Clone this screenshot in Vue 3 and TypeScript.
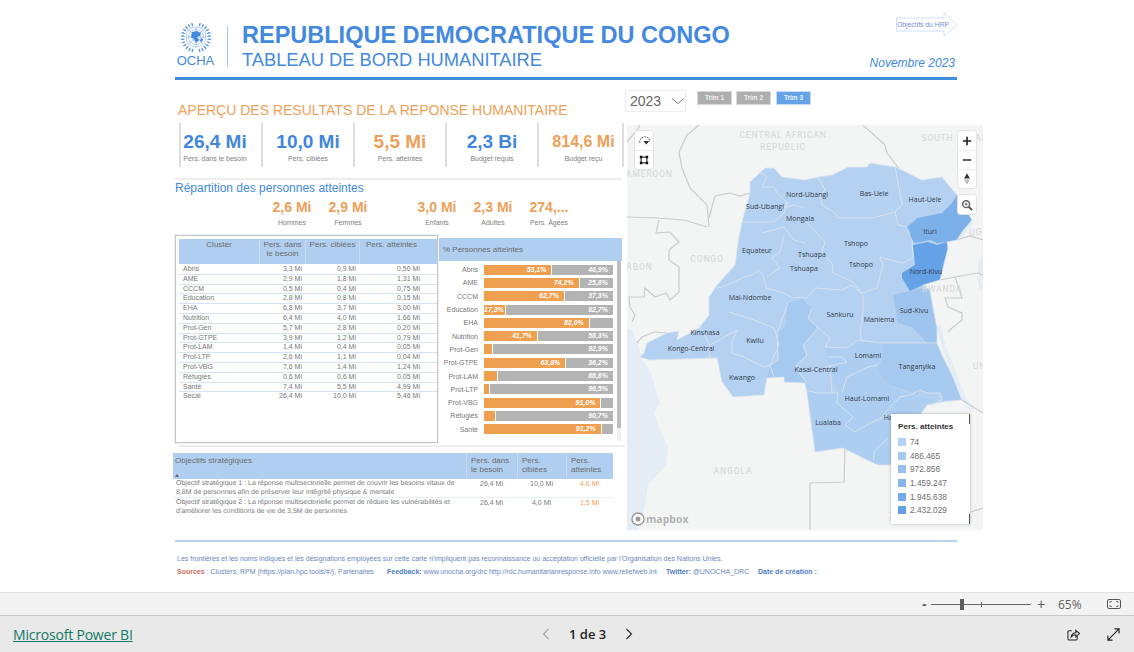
<template>
  <div class="app">
    <div class="report">
      <header class="head">
        <div class="logo">
          <svg class="emblem" viewBox="0 0 36 30">
            <g fill="none" stroke="#4389e0" stroke-width="0.4">
              <circle cx="18" cy="14" r="10" />
              <circle cx="18" cy="14" r="7.5" />
              <circle cx="18" cy="14" r="4.5" />
              <path d="M18 4V24M8 14H28M10.900 6.900L25.100 21.100M25.100 6.900L10.900 21.100" />
            </g>
            <path d="M14 9l5-1 4 2-1 3-3 1 2 3-3 3-2-4-3-2zM23 15l2 1-1 3-2-1z" fill="#4389e0" />
            <ellipse v-for="(l, i) in leaves" :key="i" :cx="l.x" :cy="l.y" rx="2.100" ry="0.750" :transform="`rotate(${l.r} ${l.x} ${l.y})`" fill="#5c98e4" />
          </svg>
          <span class="ocha">OCHA</span>
        </div>
        <div class="titles">
          <h1>REPUBLIQUE DEMOCRATIQUE DU CONGO</h1>
          <h2>TABLEAU DE BORD HUMANITAIRE</h2>
        </div>
        <div class="head-right">
          <button class="hrp">
            <svg viewBox="0 0 62 25"><path d="M.5 6H48V.8L61 12.500 48 24.200V19H.5z" fill="#fff" stroke="#cfe0f7" /></svg>
            <span>Objectifs du HRP</span>
          </button>
          <span class="month">Novembre 2023</span>
        </div>
      </header>

      <div class="main">
        <section class="left">
          <div class="apercu">APERÇU DES RESULTATS DE LA REPONSE HUMANITAIRE</div>
          <div class="kpis">
            <div v-for="k in kpis" :key="k.label" class="kpi">
              <span class="kpi-val" :class="[k.tone, { small: k.small }]">{{ k.value }}</span>
              <span class="kpi-lab">{{ k.label }}</span>
            </div>
          </div>
          <div class="rep-title">Répartition des personnes atteintes</div>
          <div class="rep-row">
            <div v-for="r in repart" :key="r.label" class="rep" :class="{ gap: r.gap }">
              <span class="rep-val">{{ r.value }}</span>
              <span class="rep-lab">{{ r.label }}</span>
            </div>
          </div>

          <div class="panels">
            <div class="panel-table">
              <div class="ct-head">
                <span class="center">Cluster</span>
                <span class="center">Pers. dans le besoin</span>
                <span class="center">Pers. ciblées</span>
                <span class="center">Pers. atteintes</span>
              </div>
              <div v-for="c in clusters" :key="c[0]" class="ct-row">
                <span>{{ c[0] }}</span>
                <span class="num">{{ c[1] }}</span>
                <span class="num">{{ c[2] }}</span>
                <span class="num">{{ c[3] }}</span>
              </div>
            </div>
            <div class="panel-bars">
              <div class="bars-head">% Personnes atteintes</div>
              <div class="bars-body">
                <div class="bars">
                  <div v-for="b in bars" :key="b.name" class="bar-row">
                    <span class="bar-name">{{ b.name }}</span>
                    <div class="bar">
                      <div class="seg orange" :style="{ width: b.pct + '%' }">{{ b.a }}</div>
                      <div class="seg grey">{{ b.b }}</div>
                    </div>
                  </div>
                </div>
                <div class="scroll"><div class="thumb"></div></div>
              </div>
            </div>
          </div>

          <div class="obj">
            <div class="obj-head">
              <span class="obj-first">Objectifs stratégiques<i class="sort"></i></span>
              <span>Pers. dans le besoin</span>
              <span>Pers. ciblées</span>
              <span>Pers. atteintes</span>
            </div>
            <div v-for="o in objectifs" :key="o.lines[0]" class="obj-row">
              <div class="obj-text">
                <div v-for="l in o.lines" :key="l">{{ l }}</div>
              </div>
              <span class="center">{{ o.a }}</span>
              <span class="center">{{ o.b }}</span>
              <span class="center tone-o">{{ o.c }}</span>
            </div>
          </div>
        </section>

        <section class="right">
          <div class="filters">
            <div class="year">
              <span>2023</span>
              <svg viewBox="0 0 16 8"><path d="M1 1l7 6 7-6" fill="none" stroke="#666" /></svg>
            </div>
            <div class="trims">
              <span class="trim">Trim 1</span>
              <span class="trim">Trim 2</span>
              <span class="trim on">Trim 3</span>
            </div>
          </div>

          <div class="map">
            <svg class="map-svg" viewBox="627 125 356 405">
              <path d="M627 328L632 330 638 345 642 360 650 370 660 403 654 413 660 430 668 447 666 465 648 485 645 505 637 530H627z" fill="#e4ecf6" />
              <path d="M983 255L978 262 977 280 980 290 983 288z" fill="#e4ecf6" />
              <path d="M972 222L964 232 958 240" fill="none" stroke="#e4ecf6" stroke-width="4" />
              <path d="M938 325L945 350 955 375 965 400 972 410" fill="none" stroke="#e4ecf6" stroke-width="4" />
              <polyline v-for="(p, i) in roads" :key="'b' + i" :points="p" fill="none" stroke="#c9cccd" stroke-width="1.200" />

              <path :d="country" fill="#b4d1f2" />
              <path v-for="p in provinces" :key="p.d" :d="p.d" :fill="p.fill" />
              <polyline v-for="(p, i) in inner" :key="'i' + i" :points="p" fill="none" stroke="#d6e2ee" stroke-width="1" />
              <path :d="country" fill="none" stroke="#dde5ec" stroke-width="0.800" />

              <text v-for="c in countries" :key="c.t + c.x" :x="c.x" :y="c.y" class="c-label" text-anchor="middle">{{ c.t }}</text>
              <text v-for="l in labels" :key="l.t + l.y" :x="l.x" :y="l.y" class="p-label" text-anchor="middle">{{ l.t }}</text>
            </svg>

            <div class="ctrl ctrl-left">
              <button>
                <svg viewBox="0 0 14 12"><path d="M2 8C1 3 5 1.500 8 1.500S13 4 12 7" fill="none" stroke="#555" stroke-dasharray="2 1" /><path d="M6 6h6L9 10z" fill="#333" /></svg>
              </button>
              <button>
                <svg viewBox="0 0 12 12"><path d="M2.500 2.500h7v7h-7z" fill="none" stroke="#111" stroke-width="1.200" /><path d="M1 1h3v3H1zM8 1h3v3H8zM1 8h3v3H1zM8 8h3v3H8z" fill="#111" /></svg>
              </button>
            </div>
            <div class="ctrl ctrl-right">
              <button><svg viewBox="0 0 12 12"><path d="M6 1v10M1 6h10" stroke="#222" stroke-width="2" /></svg></button>
              <button><svg viewBox="0 0 12 12"><path d="M1 6h10" stroke="#444" stroke-width="2" /></svg></button>
              <button><svg class="compass" viewBox="0 0 12 14"><path d="M6 0l3.500 6.500h-7z" fill="#333" /><path d="M6 14l3.500-6.500h-7z" fill="#bbb" /></svg></button>
            </div>
            <div class="ctrl ctrl-search">
              <button>
                <svg viewBox="0 0 14 14"><circle cx="6" cy="6" r="4" fill="none" stroke="#666" stroke-width="1.800" /><circle cx="6" cy="6" r="1.500" fill="#888" /><path d="M9 9l4 4" stroke="#555" stroke-width="2.200" /></svg>
              </button>
            </div>

            <div class="mapbox">
              <svg viewBox="0 0 14 14"><circle cx="7" cy="7" r="6" fill="#fff" stroke="#999" stroke-width="1.400" /><circle cx="7" cy="7" r="2.500" fill="#999" /></svg>
              <span>mapbox</span>
            </div>

            <div class="legend">
              <div class="legend-title">Pers. atteintes</div>
              <div v-for="l in legend" :key="l.t" class="legend-row">
                <i :style="{ background: l.c }"></i><span>{{ l.t }}</span>
              </div>
            </div>
          </div>
        </section>
      </div>

      <footer class="notes">
        <p>Les frontières et les noms indiqués et les désignations employées sur cette carte n'impliquent pas reconnaissance ou acceptation officielle par l'Organisation des Nations Unies.</p>
        <p class="links">
          <span class="l1"><b class="src">Sources</b> : Clusters, RPM (https://plan.hpc.tools/#/), Partenaires</span>
          <span class="l2"><b>Feedback:</b> www.unocha.org/drc http://rdc.humanitarianresponse.info www.reliefweb.int</span>
          <span class="l3"><b>Twitter:</b> @UNOCHA_DRC</span>
          <span class="l4"><b>Date de création :</b></span>
        </p>
      </footer>
    </div>

    <div class="zoombar">
      <span class="z-minus">-</span>
      <div class="slider"><i class="tick"></i><i class="knob"></i></div>
      <span class="z-plus">+</span>
      <span class="z-pct">65%</span>
      <svg class="z-fit" viewBox="0 0 14 10">
        <rect x="0.500" y="0.500" width="13" height="9" rx="1.500" fill="none" stroke="#555" />
        <path d="M3 4V2.500h2M11 4V2.500H9M3 6v1.500h2M11 6v1.500H9" fill="none" stroke="#555" stroke-width="0.800" />
      </svg>
    </div>

    <div class="pbibar">
      <a class="pbi-link">Microsoft Power BI</a>
      <div class="pager">
        <svg viewBox="0 0 8 12"><path d="M6.500 1L1.500 6l5 5" fill="none" stroke="#a8a8a8" stroke-width="1.200" /></svg>
        <span>1 de 3</span>
        <svg viewBox="0 0 8 12"><path d="M1.500 1l5 5-5 5" fill="none" stroke="#333" stroke-width="1.200" /></svg>
      </div>
      <div class="pbi-actions">
        <svg viewBox="0 0 14 14"><path d="M5 3H2.500A1.500 1.500 0 0 0 1 4.500v7A1.500 1.500 0 0 0 2.500 13h7a1.500 1.500 0 0 0 1.500-1.500V9" fill="none" stroke="#222" stroke-width="1.100" /><path d="M4.500 9.500C5 6.500 7 5 9.500 5V2.500L13.500 6 9.500 9.500V7.200C7.500 7.200 5.800 8 4.500 9.500z" fill="none" stroke="#222" stroke-width="1.100" /></svg>
        <svg viewBox="0 0 14 14"><path d="M1 13L13 1M8 1h5v5M1 8v5h5" fill="none" stroke="#222" stroke-width="1.200" /></svg>
      </div>
    </div>
  </div>
</template>

<script setup lang="ts">
// laurel leaves, both sides of the globe, bottom to top
const leaves = Array.from({ length: 24 }, (_, i) => {
  const side = i < 12 ? -1 : 1
  const n = i % 12
  const a = (15 + n * 13.500) * Math.PI / 180
  return {
    x: 18 + side * 13.500 * Math.sin(a),
    y: 14.500 + 13.500 * Math.cos(a),
    r: side * (75 - n * 13.500)
  }
})

const kpis = [
  { value: '26,4 Mi', label: 'Pers. dans le besoin', tone: 'tone-b' },
  { value: '10,0 Mi', label: 'Pers. ciblées', tone: 'tone-b' },
  { value: '5,5 Mi', label: 'Pers. atteintes', tone: 'tone-o' },
  { value: '2,3 Bi', label: 'Budget requis', tone: 'tone-b' },
  { value: '814,6 Mi', label: 'Budget reçu', tone: 'tone-o', small: true }
]

const repart = [
  { value: '2,6 Mi', label: 'Hommes' },
  { value: '2,9 Mi', label: 'Femmes' },
  { value: '3,0 Mi', label: 'Enfants', gap: true },
  { value: '2,3 Mi', label: 'Adultes' },
  { value: '274,...', label: 'Pers. Âgées' }
]

const clusters = [
  ['Abris', '3,3 Mi', '0,9 Mi', '0,50 Mi'],
  ['AME', '2,9 Mi', '1,8 Mi', '1,31 Mi'],
  ['CCCM', '0,5 Mi', '0,4 Mi', '0,75 Mi'],
  ['Education', '2,8 Mi', '0,8 Mi', '0,15 Mi'],
  ['EHA', '6,8 Mi', '3,7 Mi', '3,00 Mi'],
  ['Nutrition', '6,4 Mi', '4,0 Mi', '1,66 Mi'],
  ['Prot-Gen', '5,7 Mi', '2,8 Mi', '0,20 Mi'],
  ['Prot-GTPE', '3,9 Mi', '1,2 Mi', '0,79 Mi'],
  ['Prot-LAM', '1,4 Mi', '0,4 Mi', '0,05 Mi'],
  ['Prot-LTP', '2,6 Mi', '1,1 Mi', '0,04 Mi'],
  ['Prot-VBG', '7,6 Mi', '1,4 Mi', '1,24 Mi'],
  ['Réfugiés', '0,6 Mi', '0,6 Mi', '0,05 Mi'],
  ['Santé', '7,4 Mi', '5,5 Mi', '4,99 Mi'],
  ['Secal', '26,4 Mi', '10,0 Mi', '5,46 Mi']
]

const bars = [
  { name: 'Abris', pct: 53.1, a: '53,1%', b: '46,9%' },
  { name: 'AME', pct: 74.2, a: '74,2%', b: '25,8%' },
  { name: 'CCCM', pct: 62.7, a: '62,7%', b: '37,3%' },
  { name: 'Education', pct: 17.3, a: '17,3%', b: '82,7%' },
  { name: 'EHA', pct: 82, a: '82,0%', b: '' },
  { name: 'Nutrition', pct: 41.7, a: '41,7%', b: '58,3%' },
  { name: 'Prot-Gen', pct: 7.1, a: '', b: '92,9%' },
  { name: 'Prot-GTPE', pct: 63.8, a: '63,8%', b: '36,2%' },
  { name: 'Prot-LAM', pct: 11.2, a: '', b: '88,8%' },
  { name: 'Prot-LTP', pct: 3.5, a: '', b: '96,5%' },
  { name: 'Prot-VBG', pct: 91, a: '91,0%', b: '' },
  { name: 'Réfugiés', pct: 9.3, a: '', b: '90,7%' },
  { name: 'Santé', pct: 91.2, a: '91,2%', b: '' }
]

const objectifs = [
  {
    lines: ['Objectif stratégique 1 : La réponse multisectorielle permet de couvrir les besoins vitaux de', '8,8M de personnes afin de préserver leur intégrité physique & mentale'],
    a: '26,4 Mi', b: '10,0 Mi', c: '4,6 Mi'
  },
  {
    lines: ['Objectif stratégique 2 : La réponse multisectorielle permet de réduire les vulnérabilités et', "d'améliorer les conditions de vie de 3,5M de personnes"],
    a: '26,4 Mi', b: '4,0 Mi', c: '1,5 Mi'
  }
]

const country = 'M765 168L774 168 782 177 805 180 818 177 832 175 848 167 867 167 870 163 895 167 902 170 922 180 942 177 957 195 972 220 962 232 957 240 947 242 948 248 940 280 923 285 930 290 933 308 937 328 937 343 942 355 952 375 962 400 942 402 927 405 920 415 905 440 892 465 878 465 867 460 843 448 815 452 812 430 807 393 805 383 784 382 784 377 767 378 764 395 733 397 722 382 717 358 649 360 640 357 644 353 647 343 667 333 679 331 677 340 699 328 709 315 709 297 717 285 735 265 738 242 742 222 750 193 750 182z'

const provinces = [
  { fill: '#adcef1', d: 'M805 383L818 393 838 393 830 368 825 347 847 348 858 340 882 343 878 370 887 383 910 395 942 402 927 405 920 415 905 440 892 465 878 465 867 460 843 448 815 452 812 430 807 393z' },
  { fill: '#a5c9ef', d: 'M788 303L802 299 812 308 808 318 818 328 803 345 807 355 795 367 807 383 784 382 784 377 767 378 770 365 778 360 777 333 785 327z' },
  { fill: '#a6c9ef', d: 'M882 343L937 343 942 355 952 375 962 400 942 400 940 393 927 393 920 390 918 395 900 388 887 383 878 370 882 358z' },
  { fill: '#9fc5ee', d: 'M893 295L910 291 923 288 930 290 933 308 937 328 937 343 927 343 912 327 898 323z' },
  { fill: '#7cb0e9', d: 'M907 227L918 218 942 213 952 203 957 195 972 220 962 232 957 240 947 242 937 243 930 240 915 243 910 238 910 232z' },
  { fill: '#64a1e6', d: 'M913 245L928 242 937 245 947 242 948 248 940 280 923 285 910 291 902 278 902 273 915 265z' }
]

const inner = [
  '759,172 767,177 762,187 774,187 777,193 787,202 784,208 794,205 805,208',
  '742,222 760,222 774,222 784,213 788,202',
  '762,233 784,227 794,240 805,243',
  '784,235 780,252 772,258 780,268 767,277',
  '717,288 722,287 744,277 752,275 759,270 764,277 766,288 784,293 792,298 805,297',
  '709,345 710,358',
  '699,325 710,345 737,330',
  '729,312 754,320 774,328 779,345 770,365 774,377',
  '737,330 732,342 732,353 744,357 764,367 770,365',
  '818,177 825,190 820,195 822,205 835,213 838,218 872,218 895,212 902,205 895,167',
  '895,212 898,225 907,227',
  '907,230 912,240 913,258 902,263 880,257 883,265 877,288 862,293 853,282 832,272 833,265 822,252 825,242 812,228 805,220',
  '805,300 815,288 842,290 852,285 863,295 863,312 860,332 862,342',
  '815,325 830,338 825,347 847,348 858,340 882,343 937,343',
  '828,357 842,357 847,362 825,367 830,368 832,393',
  '805,390 818,393 838,393 837,403 853,417 845,425 855,432 870,423 888,415',
  '847,377 868,367 878,365',
  '847,377 842,393',
  '883,415 900,397 910,395 920,390 927,393 940,393 942,400 930,405',
  '888,438 875,450 873,460',
  '812,308 808,318 818,328 803,345 807,355 795,367 807,383',
  '788,303 777,333 778,360 770,365'
]

const roads = [
  '640,125 637,130 627,142',
  '699,125 687,135 679,152 682,168 690,188 707,205 709,227',
  '709,218 715,196 730,193 740,196 750,193',
  '627,217 657,218 684,220 707,227',
  '659,220 656,233 670,232 679,242 669,250 669,260 679,267 679,292 670,300 666,293 655,297 645,288 644,297 629,297 630,307 635,315 632,322',
  '863,125 885,145 887,153 900,170',
  '637,343 642,337 654,332 667,333',
  '940,280 955,277 978,273 983,275',
  '955,277 962,298 945,298 948,307 962,313 962,320 952,328 948,332',
  '845,447 844,482 810,483 810,530',
  '962,400 970,405 983,413',
  '971,512 983,508',
  '956,240 970,236 983,240'
]

const countries = [
  { t: 'CENTRAL AFRICAN', x: 783, y: 138 },
  { t: 'REPUBLIC', x: 783, y: 150 },
  { t: 'SOUTH SUDAN', x: 955, y: 141 },
  { t: 'CAMEROON', x: 646, y: 177 },
  { t: 'CONGO', x: 707, y: 262 },
  { t: 'GABON', x: 636, y: 270 },
  { t: 'ANGOLA', x: 733, y: 474 },
  { t: 'RWANDA', x: 942, y: 292 },
  { t: 'UGANDA', x: 989, y: 235 },
  { t: 'UNITED', x: 990, y: 369 },
  { t: 'ZAMBIA', x: 908, y: 519 }
]

const labels = [
  { t: 'Nord-Ubangi', x: 807, y: 197 },
  { t: 'Bas-Uele', x: 874, y: 196 },
  { t: 'Haut-Uele', x: 925, y: 202 },
  { t: 'Sud-Ubangi', x: 765, y: 209 },
  { t: 'Mongala', x: 800, y: 221 },
  { t: 'Ituri', x: 930, y: 234 },
  { t: 'Equateur', x: 757, y: 253 },
  { t: 'Tshuapa', x: 812, y: 257 },
  { t: 'Tshuapa', x: 804, y: 271 },
  { t: 'Tshopo', x: 856, y: 246 },
  { t: 'Tshopo', x: 861, y: 267 },
  { t: 'Nord-Kivu', x: 926, y: 274 },
  { t: 'Mai-Ndombe', x: 750, y: 300 },
  { t: 'Sankuru', x: 840, y: 317 },
  { t: 'Maniema', x: 879, y: 322 },
  { t: 'Sud-Kivu', x: 914, y: 313 },
  { t: 'Kinshasa', x: 705, y: 335 },
  { t: 'Kongo-Central', x: 691, y: 351 },
  { t: 'Kwilu', x: 755, y: 343 },
  { t: 'Lomami', x: 868, y: 358 },
  { t: 'Kasai-Central', x: 816, y: 372 },
  { t: 'Tanganyika', x: 917, y: 369 },
  { t: 'Kwango', x: 742, y: 380 },
  { t: 'Haut-Lomami', x: 867, y: 401 },
  { t: 'Lualaba', x: 828, y: 425 },
  { t: 'Haut-Katanga', x: 906, y: 420 }
]

const legend = [
  { t: '74', c: '#b4d2f3' },
  { t: '486.465', c: '#a8caf0' },
  { t: '972.856', c: '#98c0ee' },
  { t: '1.459.247', c: '#86b5ea' },
  { t: '1.945.638', c: '#74aae8' },
  { t: '2.432.029', c: '#64a0e6' }
]
</script>

<style>
html, body { margin: 0; background: #fff; overflow: hidden; }
</style>

<style scoped>
.app {
  width: 1134px;
  height: 652px;
  display: flex;
  flex-direction: column;
  overflow: hidden;
  font-family: "Liberation Sans", Arial, sans-serif;
  background: #fff;
}

.report { height: 592px; padding-left: 175px; box-sizing: border-box; }

/* Header */
.head {
  width: 782px;
  height: 80px;
  box-sizing: border-box;
  padding-top: 12px;
  display: flex;
  border-bottom: 3px solid #3f8ddf;
}
.logo {
  width: 37px;
  height: 41px;
  margin-top: 14px;
  padding: 0 13px 0 2px;
  border-right: 1px solid #a7c6ec;
  display: flex;
  flex-direction: column;
  align-items: center;
}
.emblem { width: 36px; height: 30px; flex: none; margin-top: -3px; }
.ocha { font-size: 13px; line-height: 12px; color: #4389e0; margin-top: 2px; }
.titles { flex: 1; padding: 10px 0 0 14px; }
h1 { margin: 0; font-size: 23.500px; line-height: 27px; font-weight: 700; color: #4389e0; white-space: nowrap; }
h2 { margin: 0; font-size: 18.300px; line-height: 22px; font-weight: 400; color: #4389e0; white-space: nowrap; }
.head-right { display: flex; flex-direction: column; align-items: flex-end; justify-content: space-between; padding-bottom: 7px; }
.hrp {
  position: relative;
  width: 62px;
  height: 25px;
  padding: 0;
  margin-right: -1px;
  border: none;
  background: none;
  font: inherit;
}
.hrp svg { position: absolute; inset: 0; width: 62px; height: 25px; }
.hrp span { position: relative; display: block; font-size: 6.800px; line-height: 25px; color: #7c8fe0; text-align: left; padding-left: 1px; white-space: nowrap; }
.month { font-size: 12px; font-style: italic; color: #4389e0; line-height: 14px; margin-right: 2px; }

.main { display: flex; gap: 5px; }

/* Left column */
.left { width: 447px; }
.apercu { padding: 21px 0 0 3px; font-size: 14px; line-height: 18px; color: #ee9f58; white-space: nowrap; }
.kpis { display: flex; margin: 4px 0 0 4px; width: 445px; height: 44px; border-right: 2px solid #ddd; box-sizing: border-box; }
.kpi { flex: 0 0 92px; box-sizing: border-box; border-left: 2px solid #ddd; display: flex; flex-direction: column; align-items: center; padding-top: 8px; }
.kpi:first-child { flex-basis: 82px; padding-right: 12px; }
.kpi:last-child { flex: 1; padding-left: 6px; }
.kpi-val { font-size: 19px; line-height: 22px; font-weight: 700; white-space: nowrap; }
.kpi-val.small { font-size: 16px; }
.kpi-lab { font-size: 7px; line-height: 9px; margin-top: 1px; color: #808080; white-space: nowrap; }
.tone-b { color: #3f86de; }
.tone-o { color: #ee9f58; }
.rep-title {
  margin-top: 11px;
  padding-top: 1px;
  border-top: 2px solid #eee;
  font-size: 12px;
  line-height: 14px;
  color: #4389e0;
}
.rep-row { display: flex; padding-left: 89px; height: 36px; margin-top: 4px; }
.rep { width: 56px; display: flex; flex-direction: column; align-items: center; }
.rep.gap { margin-left: 33px; }
.rep-val { font-size: 14px; line-height: 16px; font-weight: 700; color: #ee9f58; white-space: nowrap; }
.rep-lab { font-size: 7px; line-height: 9px; margin-top: 3px; color: #808080; white-space: nowrap; }

.panels { display: flex; gap: 1px; width: 447px; height: 208px; }
.panel-table {
  width: 263px;
  box-sizing: border-box;
  border: 1px solid #c6c6c6;
  box-shadow: 0 0 0 1px #f0f0f0;
  padding: 3px 0 0 3px;
}
.ct-head, .ct-row { display: grid; grid-template-columns: 80px 46px 54px 64px; }
.ct-head { height: 25px; margin-bottom: 1px; background: #b0cff0; font-size: 8px; line-height: 9px; color: #6b6b6b; padding-top: 1px; box-sizing: border-box; }
.ct-head .center { border-left: 1px solid #c7dcf3; padding: 0 2px; }
.ct-head .center:first-child { border-left: none; }
.center { text-align: center; }
.ct-row { height: 9.800px; box-sizing: border-box; border-bottom: 1px solid #d5e4f4; font-size: 7px; line-height: 8.500px; color: #777; padding-left: 4px; grid-template-columns: 76px 46px 54px 64px; }
.ct-row:last-child { border-bottom: none; }
.num { text-align: right; padding-right: 3px; }

.panel-bars { width: 183px; padding-top: 3px; }
.bars-head { height: 23px; background: #b0cff0; font-size: 8px; line-height: 23px; color: #6b6b6b; padding-left: 4px; }
.bars-body { display: flex; }
.bars { width: 178px; padding-top: 2px; }
.bar-row { display: flex; align-items: center; height: 13.300px; }
.bar-name { width: 39px; text-align: right; font-size: 7px; color: #777; white-space: nowrap; flex: none; }
.bar { display: flex; margin-left: 6px; width: 129px; height: 10px; flex: none; }
.seg { height: 10px; font-size: 7px; line-height: 10px; font-weight: 700; font-style: italic; color: #fff; text-align: right; padding-right: 5px; box-sizing: border-box; white-space: nowrap; }
.orange { background: #ee9f50; border-right: 1px solid #fff; padding-right: 5px; }
.grey { background: #b3b3b3; flex: 1; }
.scroll { width: 4px; height: 180px; background: #f0f0f0; }
.thumb { height: 167px; background: #bcbcbc; }

.obj { width: 440px; margin: 10px 0 0 -2px; position: relative; }
.obj::before { content: ""; display: block; position: absolute; left: 5px; right: -12px; top: -8px; height: 2px; background: #eee; }
.obj-head, .obj-row { display: grid; grid-template-columns: 293px 51px 49px 47px; }
.obj-head { height: 26px; background: #b0cff0; font-size: 8px; line-height: 9px; color: #6b6b6b; }
.obj-head > span { padding: 3px 3px 0 4px; border-left: 1px solid #c7dcf3; }
.obj-head > span:first-child { border-left: none; position: relative; padding-left: 2px; }
.sort { position: absolute; left: 2px; top: 21px; border: 2px solid transparent; border-bottom: 3px solid #666; border-top: none; }
.obj-row { font-size: 7px; line-height: 8.600px; color: #7a7a7a; padding: 1px 0 0; border-bottom: 1px solid #e4eef8; }
.obj-row:last-child { border-bottom: none; }
.obj-text { padding-left: 3px; text-rendering: geometricPrecision; white-space: nowrap; }

/* Right column */
.right { width: 356px; }
.filters { display: flex; height: 23px; margin: 10px 0 12px -2px; }
.year {
  width: 61px;
  height: 22px;
  box-sizing: border-box;
  border: 1px solid #eee;
  display: flex;
  align-items: center;
  padding-left: 4px;
  font-size: 14px;
  color: #666;
  gap: 10px;
}
.year svg { width: 15px; height: 8px; }
.trims { display: flex; gap: 4px; margin: 1px 0 0 11px; height: 14px; }
.trim {
  width: 35px;
  height: 14px;
  box-sizing: border-box;
  background: #aeaeae;
  border: 1px solid #d8d8d8;
  font-size: 6.500px;
  line-height: 12px;
  font-weight: 700;
  color: #eee;
  text-align: center;
}
.trim.on { background: #66a3e6; border-color: #c4dcf5; color: #eaf3fc; margin-left: 1px; }

.map { position: relative; width: 356px; height: 405px; background: #f3f5f5; overflow: hidden; }
.map-svg { display: block; width: 356px; height: 405px; }
.c-label { font: 500 8.600px Roboto, sans-serif; letter-spacing: 0.8px; fill: #d9dcdd; }
.p-label { font: 500 7px "Open Sans", sans-serif; fill: #2f3c4a; }

.ctrl { position: absolute; display: flex; flex-direction: column; width: 18px; background: #fff; border-radius: 3px; box-shadow: 0 0 0 1px #e4e4e4; }
.ctrl button { width: 18px; height: 19px; padding: 0; border: none; background: none; display: flex; align-items: center; justify-content: center; border-top: 1px solid #eee; }
.ctrl button:first-child { border-top: none; }
.ctrl svg { width: 10px; height: 10px; }
.ctrl svg.compass { height: 14px; }
.ctrl-left { left: 8px; top: 6px; }
.ctrl-left button:first-child svg { width: 13px; height: 12px; }
.ctrl-right { left: 331px; top: 6px; }
.ctrl-search { left: 331px; top: 70px; }
.ctrl-search svg { width: 12px; height: 12px; }

.mapbox { position: absolute; left: 4px; bottom: 4px; display: flex; align-items: center; gap: 1px; }
.mapbox svg { width: 14px; height: 14px; }
.mapbox span { font: 700 10.500px "Open Sans", sans-serif; color: #b0b0b0; text-shadow: 0 0 1px #fff; line-height: 14px; }

.legend {
  position: absolute;
  left: 264px;
  top: 289px;
  width: 79px;
  height: 110px;
  box-sizing: border-box;
  padding: 8px 0 0 7px;
  background: #fff;
  box-shadow: 0 0 3px rgba(0, 0, 0, 0.25);
}
.legend::before, .legend::after { content: ""; position: absolute; right: 0; width: 1px; height: 10px; background: #555; }
.legend::before { top: 0; }
.legend::after { bottom: 0; }
.legend-title { font-size: 8.100px; line-height: 10px; font-weight: 700; color: #333; margin-bottom: 3.500px; }
.legend-row { display: flex; align-items: center; height: 13.600px; font-size: 8.300px; color: #6e6e6e; gap: 4px; }
.legend-row i { width: 8px; height: 8px; display: block; }

/* Footer notes */
.notes { width: 782px; margin-top: 10px; border-top: 2px solid #b8d3f0; padding: 12px 0 0 2px; box-sizing: border-box; font-size: 7px; color: #6d88bd; }
.notes p { margin: 0; line-height: 9px; white-space: nowrap; }
.links { display: flex; margin-top: 4px !important; }
.notes b { color: #4f7dc4; }
.notes .src { color: #c9715a; }
.l1 { width: 210px; }
.l2 { width: 279px; }
.l3 { width: 92px; }

/* Zoom bar */
.zoombar {
  height: 24px;
  flex: none;
  box-sizing: border-box;
  display: flex;
  align-items: center;
  background: #f3f3f3;
  border-top: 1px solid #e2e2e2;
  border-bottom: 1px solid #c8c8c8;
  padding-left: 922px;
  color: #605e5c;
}
.z-minus { width: 9px; font-size: 14px; font-weight: 700; line-height: 14px; }
.slider { position: relative; width: 100px; height: 1px; background: #666; }
.tick { position: absolute; left: 50px; top: -2px; width: 1px; height: 5px; background: #666; }
.knob { position: absolute; left: 29px; top: -5px; width: 4px; height: 11px; background: #605e5c; }
.z-plus { width: 27px; padding-left: 6px; box-sizing: border-box; font-size: 14px; line-height: 14px; }
.z-pct { width: 49px; font: 12px "Open Sans", sans-serif; }
.z-fit { width: 14px; height: 10px; }

/* Power BI bar */
.pbibar { flex: 1; position: relative; display: flex; align-items: center; justify-content: space-between; background: #e9e9e9; padding: 0 14px 0 13px; }
.pbi-link { font: 14px "Open Sans", sans-serif; color: #117865; text-decoration: underline; letter-spacing: -0.200px; }
.pager { position: absolute; left: 542px; top: 0; height: 36px; display: flex; align-items: center; }
.pager svg { width: 8px; height: 12px; }
.pager span { width: 37px; margin: 0 19px; font: 600 13px "Open Sans", sans-serif; color: #252423; white-space: nowrap; }
.pbi-actions { display: flex; gap: 27px; }
.pbi-actions svg { width: 13px; height: 13px; }
</style>
